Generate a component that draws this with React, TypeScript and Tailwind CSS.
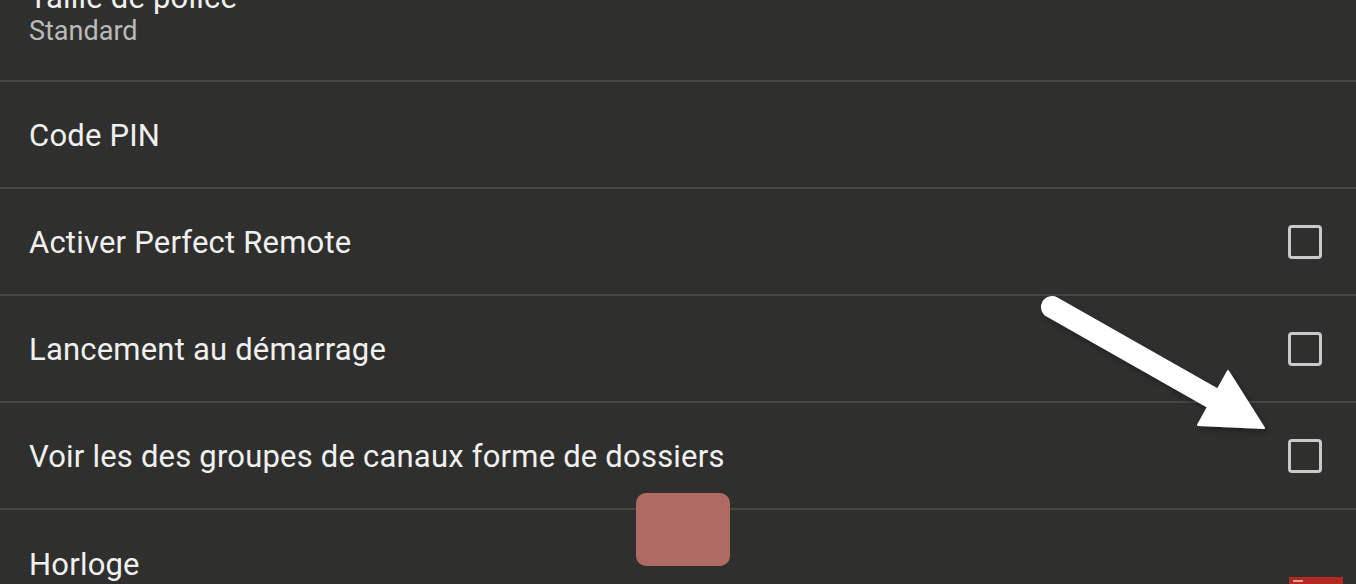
import React from 'react';

type Row = {
    title: string;
    checkbox?: boolean;
};

const rows: Row[] = [
    { title: 'Code PIN' },
    { title: 'Activer Perfect Remote', checkbox: true },
    { title: 'Lancement au démarrage', checkbox: true },
    { title: 'Voir les des groupes de canaux forme de dossiers', checkbox: true },
];

const Checkbox: React.FC = () => (
    <div className="w-[34px] h-[34px] border-[3px] border-[#c9c9c9] rounded-[4px] shrink-0" />
);

const App: React.FC = () => {
    return (
        <div
            className="relative w-full h-[584px] overflow-hidden bg-[#2f302e] text-[#f0f0f0]"
            style={{ fontFamily: 'Roboto, "Noto Sans", sans-serif' }}
        >
            {/* first row, scrolled partly out of view */}
            <div className="-mt-[25px] h-[107px] border-b-2 border-[#464745] pl-[29px] pb-[34px] flex flex-col justify-end">
                <div className="text-[31px] leading-[36px] tracking-[0.2px]">Taille de police</div>
                <div className="text-[27px] leading-[30px] text-[#bababa]">Standard</div>
            </div>

            {rows.map((row) => (
                <div
                    key={row.title}
                    className="h-[107px] border-b-2 border-[#464745] pl-[29px] pr-[34px] flex items-center justify-between"
                >
                    <span className="text-[31px] leading-[36px] tracking-[0.2px] mt-[2px]">{row.title}</span>
                    {row.checkbox && <Checkbox />}
                </div>
            ))}

            <div className="h-[107px] pl-[29px] pr-[13px] flex items-center justify-between">
                <span className="text-[31px] leading-[36px] tracking-[0.2px] mt-[2px]">Horloge</span>
                <div className="self-start mt-[67px] w-[54px] h-[34px] bg-[#b3281f] pl-[4px] pt-[3px]">
                    <div className="w-[10px] h-[2px] bg-[#d9a09b]" />
                </div>
            </div>

            {/* red overlay box */}
            <div className="absolute left-[636px] top-[493px] w-[94px] h-[73px] rounded-[10px] bg-[#b06a64]" />

            {/* annotation arrow */}
            <svg
                className="absolute inset-0 pointer-events-none"
                width="1356"
                height="584"
                viewBox="0 0 1356 584"
            >
                <defs>
                    <filter id="shadow" x="-20%" y="-20%" width="140%" height="140%">
                        <feDropShadow dx="2" dy="3" stdDeviation="3" floodColor="#000" floodOpacity="0.35" />
                    </filter>
                </defs>
                <g filter="url(#shadow)" fill="#ffffff" stroke="#ffffff">
                    <line x1="1052" y1="307" x2="1216" y2="400" strokeWidth="22" strokeLinecap="round" />
                    <polygon points="1228,371 1198,425 1264,428" strokeWidth="2" strokeLinejoin="round" />
                </g>
            </svg>
        </div>
    );
};

export default App;
